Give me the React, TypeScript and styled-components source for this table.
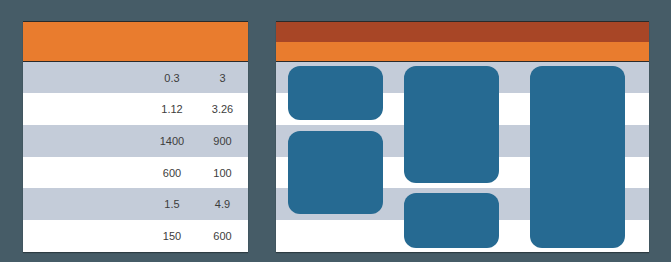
import styled, { createGlobalStyle } from "styled-components";

const GlobalStyle = createGlobalStyle`
  html, body {
    margin: 0;
    padding: 0;
    background: #465c67;
  }
  body {
    font-family: "Liberation Sans", Arial, sans-serif;
  }
`;

const rows = [
  ["0.3", "3"],
  ["1.12", "3.26"],
  ["1400", "900"],
  ["600", "100"],
  ["1.5", "4.9"],
  ["150", "600"],
];

const columns = [
  [54, 83],
  [117, 55],
  [182],
];

function App() {
  return (
    <>
      <GlobalStyle />
      <Page>
        <TablePanel>
          <Header />
          <Rows>
            {rows.map((r, i) => (
              <Row key={i} $odd={i % 2 === 0}>
                <Cell />
                <Cell>{r[0]}</Cell>
                <Cell>{r[1]}</Cell>
              </Row>
            ))}
          </Rows>
        </TablePanel>
        <LayoutPanel>
          <TopBand />
          <SubBand />
          <Body>
            <Rows>
              {rows.map((_, i) => (
                <Stripe key={i} $odd={i % 2 === 0} />
              ))}
            </Rows>
            <Overlay>
              {columns.map((col, c) => (
                <Column key={c} $gap={c === 0 ? 11 : 10}>
                  {col.map((h, j) => (
                    <Block key={j} style={{ height: h }} />
                  ))}
                </Column>
              ))}
            </Overlay>
          </Body>
        </LayoutPanel>
      </Page>
    </>
  );
}

export default App;

const Page = styled.div`
  display: flex;
  gap: 28px;
  padding: 21px 0 0 23px;
  height: 262px;
  box-sizing: border-box;
`;

const Panel = styled.div`
  display: flex;
  flex-direction: column;
  height: 230px;
  border-top: 1px solid #2a2a2a;
  box-shadow: 0 1px 1px rgba(0, 0, 0, 0.35);
  background: #fff;
`;

const TablePanel = styled(Panel)`
  width: 225px;
`;

const LayoutPanel = styled(Panel)`
  width: 373px;
`;

const Header = styled.div`
  height: 39px;
  background: #e97c2e;
  border-bottom: 1px solid #2b2b2b;
`;

const TopBand = styled.div`
  height: 20px;
  background: #a84626;
`;

const SubBand = styled.div`
  height: 19px;
  background: #e97c2e;
  border-bottom: 1px solid #2b2b2b;
`;

const Rows = styled.div`
  display: grid;
  grid-template-rows: 31px 32px 32px 31px 32px 31px;
  height: 189px;
`;

const Row = styled.div<{ $odd: boolean }>`
  display: grid;
  grid-template-columns: 124px 50px 51px;
  align-items: center;
  background: ${(p) => (p.$odd ? "#c4ccd9" : "#ffffff")};
`;

const Cell = styled.div`
  text-align: center;
  font-size: 11px;
  color: #3d3d3d;
`;

const Body = styled.div`
  position: relative;
`;

const Stripe = styled.div<{ $odd: boolean }>`
  background: ${(p) => (p.$odd ? "#c4ccd9" : "#ffffff")};
`;

const Overlay = styled.div`
  position: absolute;
  inset: 0;
  display: flex;
  padding: 4px 0 0 12px;
  & > :nth-child(2) {
    margin-left: 21px;
  }
  & > :nth-child(3) {
    margin-left: 31px;
  }
`;

const Column = styled.div<{ $gap: number }>`
  display: flex;
  flex-direction: column;
  width: 95px;
  gap: ${(p) => p.$gap}px;
`;

const Block = styled.div`
  background: #266a92;
  border-radius: 12px;
`;
